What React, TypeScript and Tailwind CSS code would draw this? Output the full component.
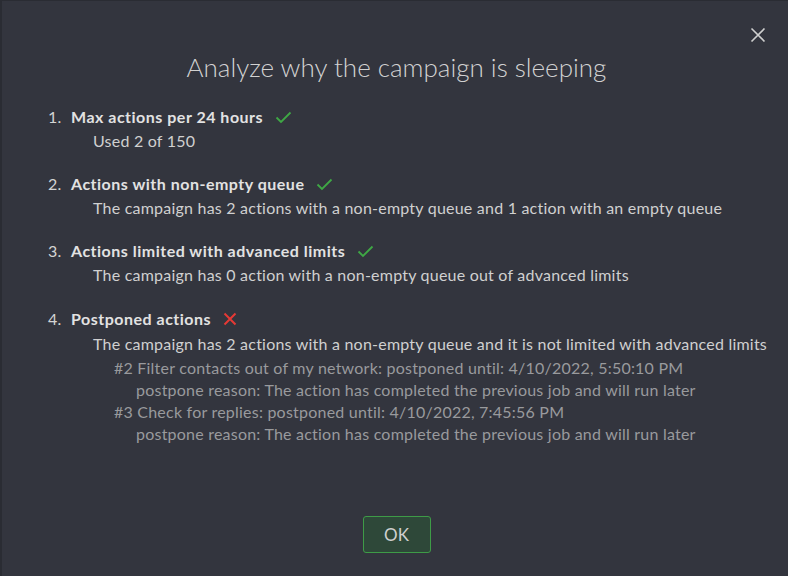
import React from "react";

const Check = () => (
  <svg width="17" height="13" viewBox="0 0 17 13" className="ml-3 shrink-0">
    <path d="M1.5 6.5 L6 11 L15.5 1.5" fill="none" stroke="#3fa845" strokeWidth="1.8" />
  </svg>
);

const Cross = () => (
  <svg width="14" height="14" viewBox="0 0 14 14" className="ml-3 shrink-0">
    <path d="M1.5 1.5 L12.5 12.5 M12.5 1.5 L1.5 12.5" fill="none" stroke="#e53935" strokeWidth="2" />
  </svg>
);

function Item({ n, title, ok, children }: { n: number; title: string; ok: boolean; children: React.ReactNode }) {
  return (
    <div className="flex flex-col">
      <div className="flex items-center h-[24px]">
        <span className="w-[23px] text-[16px] text-[#d4d4d4]">{n}.</span>
        <span className="text-[16px] font-bold tracking-[0.5px] text-[#e2e2e2]">{title}</span>
        {ok ? <Check /> : <Cross />}
      </div>
      <div className="pl-[45px]">{children}</div>
    </div>
  );
}

export default function App() {
  return (
    <div
      className="w-[788px] h-[576px] bg-[#33353e] border-l-2 border-t border-l-[#2a2c33] border-t-[#2a2c33] flex flex-col relative"
      style={{ fontFamily: "Lato, 'Noto Sans', sans-serif" }}
    >
      <button className="absolute right-[22px] top-[26px] w-[16px] h-[16px]">
        <svg width="16" height="16" viewBox="0 0 16 16">
          <path d="M1.5 1.5 L14.5 14.5 M14.5 1.5 L1.5 14.5" fill="none" stroke="#cfcfcf" strokeWidth="1.6" />
        </svg>
      </button>
      <h1 className="text-center text-[26px] text-[#d2d2d2] mt-[48px] leading-[36px] font-light pl-[3px]">
        Analyze why the campaign is sleeping
      </h1>
      <div className="flex flex-col gap-[19px] pl-[46px] mt-[20px] tracking-[0.22px]">
        <Item n={1} title="Max actions per 24 hours" ok>
          <div className="text-[16px] text-[#d0d0d0] leading-[24px]">Used 2 of 150</div>
        </Item>
        <Item n={2} title="Actions with non-empty queue" ok>
          <div className="text-[16px] text-[#d0d0d0] leading-[24px]">
            The campaign has 2 actions with a non-empty queue and 1 action with an empty queue
          </div>
        </Item>
        <Item n={3} title="Actions limited with advanced limits" ok>
          <div className="text-[16px] text-[#d0d0d0] leading-[24px]">
            The campaign has 0 action with a non-empty queue out of advanced limits
          </div>
        </Item>
        <div className="mt-[1px]">
          <Item n={4} title="Postponed actions" ok={false}>
            <div className="text-[16px] text-[#d0d0d0] leading-[26px] whitespace-nowrap">
              The campaign has 2 actions with a non-empty queue and it is not limited with advanced limits
            </div>
            <div className="pl-[21px] text-[16px] text-[#999a9d] leading-[22px] whitespace-nowrap">
              <div>#2 Filter contacts out of my network: postponed until: 4/10/2022, 5:50:10 PM</div>
              <div className="pl-[22px]">postpone reason: The action has completed the previous job and will run later</div>
              <div>#3 Check for replies: postponed until: 4/10/2022, 7:45:56 PM</div>
              <div className="pl-[22px]">postpone reason: The action has completed the previous job and will run later</div>
            </div>
          </Item>
        </div>
      </div>
      <div className="flex-1" />
      <div className="flex justify-center mb-[23px] pl-[3px]">
        <button className="w-[68px] h-[37px] rounded-[3px] border-[1.5px] border-[#3e9b47] bg-[#2e4839] text-[#cfcfcf] text-[17px]">
          OK
        </button>
      </div>
    </div>
  );
}
